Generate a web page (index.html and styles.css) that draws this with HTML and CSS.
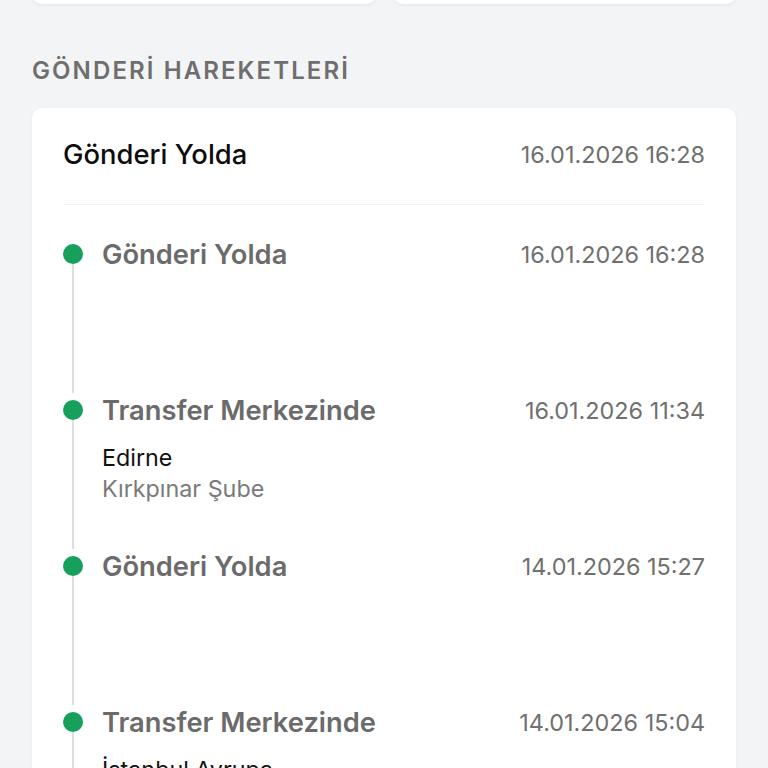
FILE: index.html
```html
<!DOCTYPE html>
<html lang="tr">
<head>
<meta charset="utf-8">
<title>Gönderi Hareketleri</title>
<link rel="stylesheet" href="styles.css">
</head>
<body>
<div class="page">
  <div class="top-cards">
    <div class="mini-card"></div>
    <div class="mini-card"></div>
  </div>

  <h2 class="section-title">GÖNDERİ HAREKETLERİ</h2>

  <div class="card">
    <div class="card-header">
      <span class="status">Gönderi Yolda</span>
      <span class="date">16.01.2026 16:28</span>
    </div>

    <div class="timeline">
      <div class="item">
        <div class="marker"><span class="dot"></span><span class="line"></span></div>
        <div class="content">
          <div class="row">
            <span class="title">Gönderi Yolda</span>
            <span class="date">16.01.2026 16:28</span>
          </div>
        </div>
      </div>

      <div class="item">
        <div class="marker"><span class="dot"></span><span class="line"></span></div>
        <div class="content">
          <div class="row">
            <span class="title">Transfer Merkezinde</span>
            <span class="date">16.01.2026 11:34</span>
          </div>
          <div class="details">
            <div class="city">Edirne</div>
            <div class="branch">Kırkpınar Şube</div>
          </div>
        </div>
      </div>

      <div class="item">
        <div class="marker"><span class="dot"></span><span class="line"></span></div>
        <div class="content">
          <div class="row">
            <span class="title">Gönderi Yolda</span>
            <span class="date">14.01.2026 15:27</span>
          </div>
        </div>
      </div>

      <div class="item">
        <div class="marker"><span class="dot"></span><span class="line"></span></div>
        <div class="content">
          <div class="row">
            <span class="title">Transfer Merkezinde</span>
            <span class="date">14.01.2026 15:04</span>
          </div>
          <div class="details">
            <div class="city">İstanbul Avrupa</div>
            <div class="branch">Avcılar Şube</div>
          </div>
        </div>
      </div>
    </div>
  </div>
</div>
</body>
</html>
```

FILE: styles.css
```css
* { box-sizing: border-box; }

html, body {
  margin: 0;
  padding: 0;
  background: #f3f4f6;
  font-family: Inter, "Noto Sans", "Liberation Sans", sans-serif;
  overflow: hidden;
}

.page {
  padding: 0 32px;
}

.top-cards {
  display: grid;
  grid-template-columns: 1fr 1fr;
  gap: 17px;
  margin-top: -40px;
}

.mini-card {
  height: 44px;
  background: #ffffff;
  border-radius: 10px;
  box-shadow: 0 1px 4px rgba(0, 0, 0, 0.06);
}

.section-title {
  margin: 52px 0 22px;
  font-size: 24px;
  line-height: 30px;
  font-weight: 600;
  color: #6e6e6e;
  letter-spacing: 2.1px;
}

.card {
  background: #ffffff;
  border-radius: 10px;
  padding: 29px 31px 30px;
  box-shadow: 0 1px 4px rgba(0, 0, 0, 0.04);
}

.card-header {
  display: flex;
  justify-content: space-between;
  align-items: center;
  height: 34px;
  box-sizing: content-box;
  padding-bottom: 33px;
  border-bottom: 1px solid #f1f1f1;
}

.status {
  font-size: 27.4px;
  font-weight: 500;
  color: #0d0d0d;
}

.date {
  font-size: 23.4px;
  font-weight: 400;
  color: #707070;
}

.timeline {
  margin-top: 32px;
}

.item {
  display: flex;
  gap: 19px;
  min-height: 156px;
}

.marker {
  width: 20px;
  flex: 0 0 20px;
  display: flex;
  flex-direction: column;
  align-items: center;
}

.dot {
  width: 20px;
  height: 20px;
  margin-top: 7px;
  border-radius: 50%;
  background: #16a05c;
  flex: 0 0 auto;
}

.line {
  flex: 1;
  width: 2px;
  background: #dedede;
}

.content {
  flex: 1;
}

.row {
  display: flex;
  justify-content: space-between;
  align-items: center;
  height: 34px;
}

.title {
  font-size: 27.3px;
  font-weight: 600;
  color: #6b6b6b;
}

.details {
  margin-top: 15px;
  font-size: 23.3px;
  line-height: 31px;
}

.city {
  color: #111111;
}

.branch {
  color: #7a7a7a;
}
```
